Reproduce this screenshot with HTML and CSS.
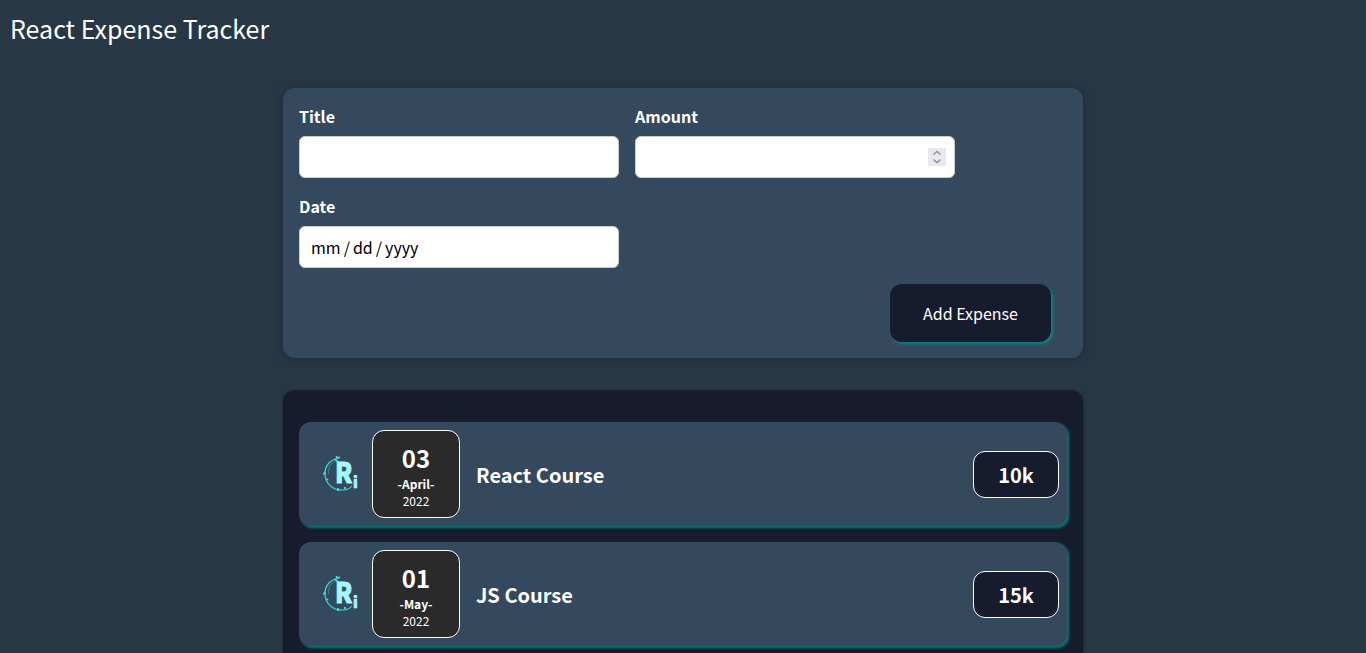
FILE: index.html
```html
<!DOCTYPE html>
<html lang="en">
<head>
<meta charset="utf-8">
<title>React Expense Tracker</title>
<link rel="stylesheet" href="styles.css">
</head>
<body>
<svg class="defs" width="0" height="0" aria-hidden="true">
  <symbol id="logo-ring" viewBox="0 0 50 50">
    <g fill="none" stroke="#3edbd3">
      <path d="M22 9.500C15 11 10 17 10 24.500c0 10 8 17 17 16.500 4 0 8-1.500 10-4" stroke-width="1.200"/>
      <path d="M20.500 11.500C15 14.500 13 19.500 13.500 25" stroke-width=".6" opacity=".7"/>
      <path d="M21.500 7l1 3M20 10.500l4 3M22 9.500l3-1.500M8 24.500h3M23 39v3M13 30l-2 1M30 40v-2" stroke-width="1.900"/>
    </g>
  </symbol>
</svg>
<header class="header"><h1 class="header__title">React Expense Tracker</h1></header>
<main>
  <form class="expense-form">
    <div class="controls">
      <div class="control"><label class="control__label">Title</label><div class="control__input"></div></div>
      <div class="control"><label class="control__label">Amount</label>
        <div class="control__input control__input--number">
          <svg class="spinner" viewBox="0 0 18 18"><path d="M5.500 6.500L9 3.500l3.500 3M5.500 11.500l3.500 3 3.500-3" fill="none" stroke="#8f8f9d" stroke-width="1.400"/></svg>
        </div>
      </div>
      <div class="control"><label class="control__label">Date</label>
        <div class="control__input"><span>mm</span><span class="slash">/</span><span>dd</span><span class="slash">/</span><span>yyyy</span></div>
      </div>
    </div>
    <div class="actions"><button class="button" type="button">Add Expense</button></div>
  </form>
  <section class="expenses">
    <article class="item">
      <div class="logo"><svg class="logo__ring"><use href="#logo-ring"/></svg><span class="logo__r">R</span><span class="logo__i">i</span></div>
      <div class="date"><div class="date__day">03</div><div class="date__month">-April-</div><div class="date__year">2022</div></div>
      <h2 class="item__title">React Course</h2>
      <div class="price">10k</div>
    </article>
    <article class="item">
      <div class="logo"><svg class="logo__ring"><use href="#logo-ring"/></svg><span class="logo__r">R</span><span class="logo__i">i</span></div>
      <div class="date"><div class="date__day">01</div><div class="date__month">-May-</div><div class="date__year">2022</div></div>
      <h2 class="item__title">JS Course</h2>
      <div class="price">15k</div>
    </article>
  </section>
</main>
</body>
</html>
```

FILE: styles.css
```css
* { box-sizing: border-box; }
html { height: 100%; }
body {
  margin: 0;
  background: #283746;
  color: #fff;
  font: 16px/24px "Noto Sans CJK JP", "Noto Sans", sans-serif;
}
.defs { display: block; }
.header { height: 88px; padding: 10px; }
.header__title { margin: 0; font-size: 25px; font-weight: 400; line-height: 36px; }
.expense-form {
  width: 800px;
  height: 270px;
  margin: 0 auto 32px;
  padding: 16px;
  border-radius: 12px;
  background: #34495e;
  box-shadow: 0 1px 8px rgba(0, 0, 0, .25);
}
.controls { display: flex; flex-wrap: wrap; gap: 16px; margin-bottom: 16px; }
.control { width: 320px; }
.control__label { display: block; margin-bottom: 8px; font-weight: 700; }
.control__input {
  display: flex;
  align-items: center;
  height: 42px;
  padding: 0 11px;
  border: 1px solid #ccc;
  border-radius: 6px;
  background: #fff;
  color: #000;
}
.control__input--number { justify-content: flex-end; padding: 0 8px; }
.slash { padding: 0 3px; }
.spinner { width: 18px; height: 18px; background: #e9e9ed; }
.actions { display: flex; justify-content: flex-end; padding-right: 16px; }
.button {
  width: 161px;
  height: 58px;
  padding: 0;
  border: 0;
  border-radius: 12px;
  background: #161b2e;
  color: #fff;
  font: inherit;
  box-shadow: 2px 2px 3px rgba(8, 140, 134, .85);
}
.expenses {
  width: 800px;
  height: 263px;
  margin: 0 auto;
  padding: 32px 16px 0;
  border-radius: 12px 12px 0 0;
  background: #161b2e;
  box-shadow: 0 1px 3px #161b2e;
  clip-path: inset(-6px -6px 0);
}
.item {
  display: flex;
  align-items: center;
  height: 104px;
  padding: 8px;
  border-radius: 12px;
  background: #34495e;
  box-shadow: 2px 2px 3px #087d78;
}
.item + .item { margin-top: 16px; }
.logo { position: relative; width: 50px; height: 50px; margin: 0 7px 0 8px; color: #a5f8ff; }
.logo__ring { display: block; width: 50px; height: 50px; }
.logo__r, .logo__i { position: absolute; font-weight: 900; line-height: 1; }
.logo__r {
  left: 20px;
  top: 8px;
  font-size: 28px;
  -webkit-text-stroke: .8px #a5f8ff;
  transform: scaleX(.88);
  transform-origin: left;
}
.logo__i { left: 38px; top: 25px; font-size: 15px; -webkit-text-stroke: .6px #a5f8ff; }
.date {
  width: 88px;
  height: 88px;
  padding-top: 9px;
  border: 1px solid #fff;
  border-radius: 12px;
  background: #2a2a2a;
  text-align: center;
}
.date__day { font-size: 24px; font-weight: 700; line-height: 36px; }
.date__month { margin-top: -1px; font-size: 12px; font-weight: 700; line-height: 17px; }
.date__year { font-size: 12px; line-height: 17px; }
.item__title { flex: 1; margin: 2px 0 0 16px; font-size: 20px; font-weight: 700; line-height: 30px; }
.price {
  width: 86px;
  height: 47px;
  border: 1px solid #fff;
  border-radius: 12px;
  background: #161b2e;
  font-size: 20px;
  font-weight: 700;
  line-height: 46px;
  text-align: center;
}
```
